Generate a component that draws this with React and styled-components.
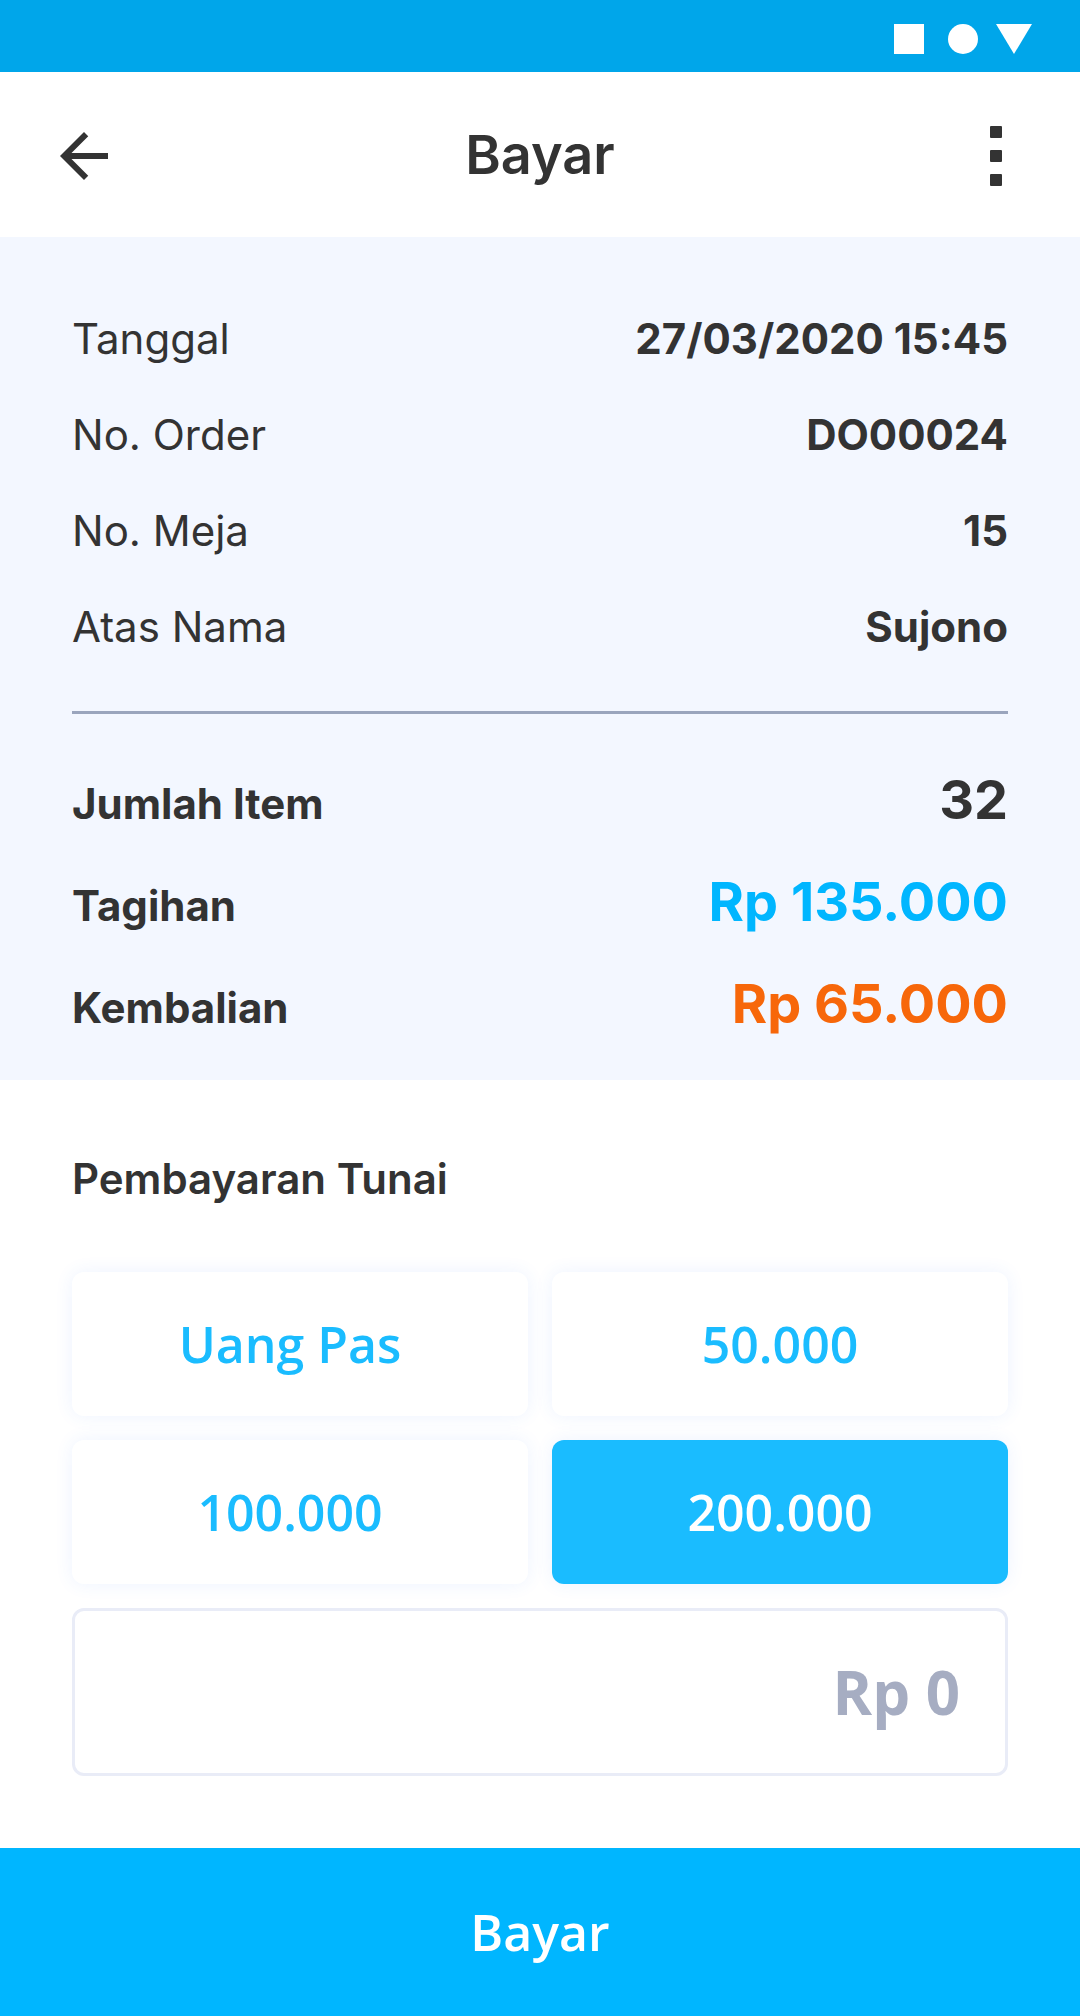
import React, { useState } from "react";
import styled, { createGlobalStyle } from "styled-components";

const GlobalStyle = createGlobalStyle`
  *, *::before, *::after { box-sizing: border-box; }
  body {
    margin: 0;
    background: #ffffff;
    color: #333333;
    font-family: Inter, "Liberation Sans", sans-serif;
    font-optical-sizing: none;
  }
  button, input { font: inherit; }
`;

const Screen = styled.div`
  display: flex;
  flex-direction: column;
  min-height: 100vh;
`;

const StatusBar = styled.div`
  display: flex;
  justify-content: flex-end;
  padding: 24px 48px 18px;
  background: #00a6ea;
`;

const StatusIcons = styled.svg`
  display: block;
  width: 138px;
  height: 30px;
  fill: #ffffff;
`;

const Header = styled.header`
  display: flex;
  align-items: flex-start;
  justify-content: space-between;
  padding: 48px 48px 45px;
`;

const Title = styled.h1`
  margin: 0;
  font-size: 54px;
  line-height: 70px;
  font-weight: 600;
`;

const IconButton = styled.button`
  display: block;
  padding: 0;
  border: 0;
  background: none;
  color: inherit;
  cursor: pointer;

  svg {
    display: block;
    width: 72px;
    height: 72px;
    fill: currentColor;
  }
`;

const Summary = styled.section`
  padding: 72px 72px 41px;
  background: #f3f7ff;
`;

const DetailList = styled.dl`
  display: flex;
  flex-direction: column;
  gap: 36px;
  margin: 0;
`;

const DetailRow = styled.div`
  display: flex;
  align-items: baseline;
  justify-content: space-between;
  font-size: 42px;
  line-height: 60px;
`;

const Label = styled.dt`
  font-weight: 400;
`;

const Value = styled.dd`
  margin: 0;
  font-weight: 700;
`;

const Divider = styled.hr`
  height: 3px;
  margin: 54px 0 55px;
  border: 0;
  background: #9aa5bd;
`;

const TotalRow = styled.div`
  display: flex;
  align-items: baseline;
  justify-content: space-between;
  font-weight: 700;
  line-height: 62px;
`;

const TotalLabel = styled.dt`
  font-size: 42px;
`;

const TotalValue = styled.dd`
  margin: 0;
  font-size: 54px;
  color: ${({ $color }) => $color};
`;

const Payment = styled.main`
  flex: 1;
  padding: 72px;
`;

const SectionTitle = styled.h2`
  margin: 0 0 66px;
  font-size: 42px;
  line-height: 54px;
  font-weight: 600;
`;

const AmountGrid = styled.div`
  display: grid;
  grid-template-columns: 1fr 1fr;
  gap: 24px;
  margin-bottom: 24px;
`;

const AmountButton = styled.button`
  height: 144px;
  padding: 0;
  border: 0;
  border-radius: 12px;
  background: ${({ $selected }) => ($selected ? "#1abcff" : "#ffffff")};
  box-shadow: 0 0 18px rgba(60, 120, 255, 0.09);
  color: ${({ $selected }) => ($selected ? "#ffffff" : "#1abcff")};
  font-family: "Open Sans", Lato, sans-serif;
  font-size: 50px;
  font-weight: 600;
  line-height: 60px;
  cursor: pointer;

  &:nth-child(odd) {
    padding-right: 20px;
  }
`;

const AmountInput = styled.input`
  display: block;
  width: 100%;
  height: 168px;
  padding: 0 45px;
  border: 3px solid #e9ecf7;
  border-radius: 12px;
  background: #ffffff;
  color: #333333;
  font-family: "Open Sans", Lato, sans-serif;
  font-size: 60px;
  font-weight: 700;
  text-align: right;

  &::placeholder {
    color: #a6adc2;
    opacity: 1;
  }
`;

const PayButton = styled.button`
  height: 168px;
  padding: 0;
  border: 0;
  background: #00b6ff;
  color: #ffffff;
  font-family: "Open Sans", Lato, sans-serif;
  font-size: 50px;
  font-weight: 600;
  line-height: 60px;
  cursor: pointer;
`;

const details = [
  ["Tanggal", "27/03/2020 15:45"],
  ["No. Order", "DO00024"],
  ["No. Meja", "15"],
  ["Atas Nama", "Sujono"],
];

const totals = [
  ["Jumlah Item", "32", "#333333"],
  ["Tagihan", "Rp 135.000", "#00b6ff"],
  ["Kembalian", "Rp 65.000", "#f7670a"],
];

const amounts = ["Uang Pas", "50.000", "100.000", "200.000"];

export default function App() {
  const [selected, setSelected] = useState("200.000");

  return (
    <Screen>
      <GlobalStyle />
      <StatusBar>
        <StatusIcons viewBox="0 0 138 30" aria-hidden="true">
          <rect width="30" height="30" />
          <circle cx="69" cy="15" r="15" />
          <path d="M102 0h36l-18 30z" />
        </StatusIcons>
      </StatusBar>
      <Header>
        <IconButton type="button" aria-label="Kembali">
          <svg viewBox="0 0 24 24">
            <path d="M20 11H7.83l5.59-5.59L12 4l-8 8 8 8 1.41-1.41L7.83 13H20z" />
          </svg>
        </IconButton>
        <Title>Bayar</Title>
        <IconButton type="button" aria-label="Menu">
          <svg viewBox="0 0 72 72">
            <rect x="30" y="6" width="12" height="12" rx="1" />
            <rect x="30" y="30" width="12" height="12" rx="1" />
            <rect x="30" y="54" width="12" height="12" rx="1" />
          </svg>
        </IconButton>
      </Header>
      <Summary>
        <DetailList>
          {details.map(([label, value]) => (
            <DetailRow key={label}>
              <Label>{label}</Label>
              <Value>{value}</Value>
            </DetailRow>
          ))}
        </DetailList>
        <Divider />
        <DetailList>
          {totals.map(([label, value, color]) => (
            <TotalRow key={label}>
              <TotalLabel>{label}</TotalLabel>
              <TotalValue $color={color}>{value}</TotalValue>
            </TotalRow>
          ))}
        </DetailList>
      </Summary>
      <Payment>
        <SectionTitle id="payment-title">Pembayaran Tunai</SectionTitle>
        <AmountGrid role="group" aria-labelledby="payment-title">
          {amounts.map((amount) => (
            <AmountButton
              key={amount}
              type="button"
              $selected={amount === selected}
              aria-pressed={amount === selected}
              onClick={() => setSelected(amount)}
            >
              {amount}
            </AmountButton>
          ))}
        </AmountGrid>
        <AmountInput
          type="text"
          inputMode="numeric"
          placeholder="Rp 0"
          aria-labelledby="payment-title"
        />
      </Payment>
      <PayButton type="button">Bayar</PayButton>
    </Screen>
  );
}
